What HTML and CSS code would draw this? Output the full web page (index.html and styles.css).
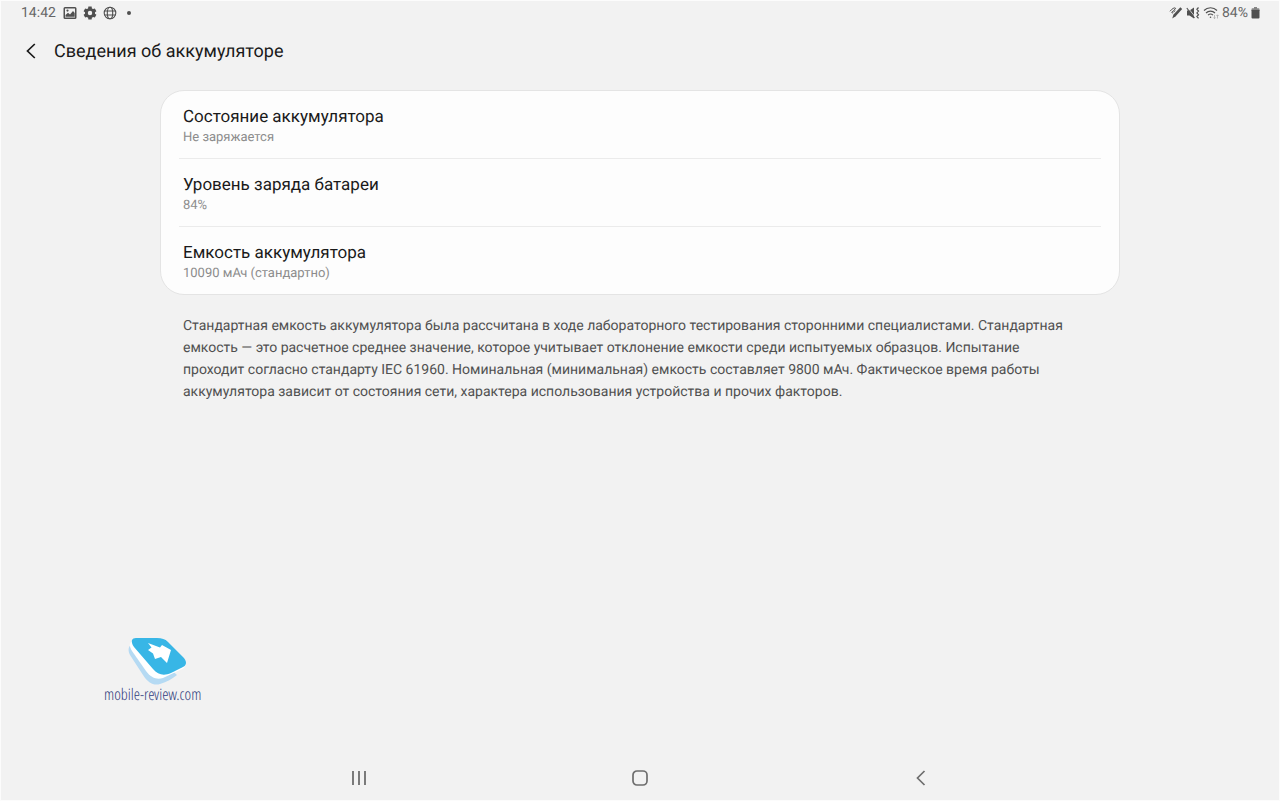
FILE: index.html
```html
<!DOCTYPE html>
<html lang="ru">

<head>
    <meta charset="UTF-8">
    <meta name="viewport" content="width=device-width, initial-scale=1.0">
    <title>Сведения об аккумуляторе</title>
    <link rel="stylesheet" href="styles.css">
</head>

<body>

    <div class="status-bar">
        <div class="status-left">
            <span class="clock">14:42</span>
            <svg width="14" height="14" viewBox="0 0 14 14">
                <path fill="#505050" fill-rule="evenodd" d="M2 1h10a1.500 1.500 0 0 1 1.500 1.500v9A1.500 1.500 0 0 1 12 13H2A1.500 1.500 0 0 1 .5 11.500v-9A1.500 1.500 0 0 1 2 1zM2 2.400v9.200h10V2.400z" />
                <path fill="#505050" d="M2.500 10.800V9l2.500-2.200 2 1.600 3-3.400 1.700 2v3.800z" />
                <circle cx="4.500" cy="4.600" r="1.100" fill="#505050" />
            </svg>
            <svg width="14" height="14" viewBox="0 0 24 24">
                <path fill="#505050" d="M20.500 13.200a8 8 0 0 0 0-2.400l2.500-2-2.700-4.700-3 1.200a8 8 0 0 0-2-1.200L14.800 1H9.200l-.5 3.100a8 8 0 0 0-2 1.200l-3-1.200L1 8.800l2.500 2a8 8 0 0 0 0 2.400L1 15.200l2.700 4.700 3-1.200a8 8 0 0 0 2 1.200l.5 3.100h5.600l.5-3.100a8 8 0 0 0 2-1.200l3 1.200 2.700-4.700zM12 15.800a3.800 3.800 0 1 1 0-7.600 3.800 3.800 0 0 1 0 7.600z" />
            </svg>
            <svg width="14" height="14" viewBox="0 0 14 14" fill="none" stroke="#505050" stroke-width="1.100">
                <circle cx="7" cy="7" r="5.800" />
                <ellipse cx="7" cy="7" rx="2.700" ry="5.800" />
                <path d="M1.400 5h11.200M1.400 9h11.200" />
            </svg>
            <span class="more-dot"></span>
        </div>
        <div class="status-right">
            <svg width="14" height="14" viewBox="0 0 14 14">
                <path fill="#505050" d="M11.300 1.200l1.900 1.700-6.500 7.300L3.200 12.500l1.300-3.900z" />
                <path fill="none" stroke="#505050" stroke-width="1" stroke-linecap="round" d="M1.200 5C3 2.500 6 1.200 6.500 2.200S2.200 5.800 2.800 6.800 5 5.200 6 4.600" />
            </svg>
            <svg width="14" height="14" viewBox="0 0 14 14">
                <path fill="#505050" d="M1 4.500h2.500L8 1.500v11L3.500 9.500H1z" />
                <path fill="none" stroke="#f2f2f2" stroke-width=".8" d="M1.800 1.600l7 9" />
                <path fill="none" stroke="#505050" stroke-width="1.100" d="M.8 2L8.500 12" />
                <path fill="none" stroke="#505050" stroke-width="1.200" d="M12.500 1.500l-1.600 1.800 1.600 1.800-1.600 1.800 1.600 1.800-1.600 1.800 1.600 1.800" />
            </svg>
            <svg width="16" height="14" viewBox="0 0 16 14" fill="none" stroke="#505050" stroke-width="1.100">
                <path d="M1 4.500c3.500-3.600 9.500-3.600 13 0M3 7c2.500-2.500 6.500-2.500 9 0M5 9.200c1.500-1.400 3.500-1.400 5 0" />
                <circle cx="7.500" cy="11.200" r=".8" fill="#505050" stroke="none" />
                <path stroke="#aaaaaa" stroke-width=".8" d="M11.500 9v3.500M10.400 11.500l1.100 1.200 1.100-1.200M14.500 12.500V9M13.400 10l1.100-1.200L15.600 10" />
            </svg>
            <span class="battery-text">84%</span>
            <svg width="9" height="14" viewBox="0 0 9 14">
                <path fill="#858585" d="M3 1h3v1.200h1.500a1 1 0 0 1 1 1V5h-8V3.200a1 1 0 0 1 1-1H3z" />
                <path fill="#505050" d="M.5 4h8v7.500a1 1 0 0 1-1 1h-6a1 1 0 0 1-1-1z" />
            </svg>
        </div>
    </div>

    <header class="header">
        <button class="back-btn" aria-label="Назад">
            <svg width="12" height="18" viewBox="0 0 12 18">
                <path fill="none" stroke="#1a1a1a" stroke-width="1.700" d="M9.800 1L2.500 8l7.300 7" />
            </svg>
        </button>
        <h1>Сведения об аккумуляторе</h1>
    </header>

    <main class="content">
        <div class="card">
            <div class="row">
                <h2>Состояние аккумулятора</h2>
                <p>Не заряжается</p>
            </div>
            <div class="row">
                <h2>Уровень заряда батареи</h2>
                <p>84%</p>
            </div>
            <div class="row">
                <h2>Емкость аккумулятора</h2>
                <p>10090 мАч (стандартно)</p>
            </div>
        </div>
        <p class="note">Стандартная емкость аккумулятора была рассчитана в ходе лабораторного тестирования сторонними специалистами. Стандартная емкость — это расчетное среднее значение, которое учитывает отклонение емкости среди испытуемых образцов. Испытание проходит согласно стандарту IEC 61960. Номинальная (минимальная) емкость составляет 9800 мАч. Фактическое время работы аккумулятора зависит от состояния сети, характера использования устройства и прочих факторов.</p>
    </main>

    <div class="watermark">
        <svg width="60" height="48" viewBox="0 0 60 48">
            <path fill="#b5daf3" d="M3 7C0 9 0 13 2 17l13 20c5 8 11 11 17 9 7-2 12-5 17-9L30 20z" />
            <path fill="#ffffff" d="M5 2C1 5 1 8 4 13l14 20c5 7 11 9 17 7l19-9c4-2 5-5 3-9L30 6z" />
            <path fill="#38b6e6" d="M8 0h21c5 0 8 1 11 4l15 15c4 4 4 8 0 10l-12 6c-7 3-13 2-18-4L6 9C2 3 4 0 8 0z" />
            <path fill="#ffffff" d="M20 5l12 4.500 2-2.500 9 5-4 13-6-6-6 2-2-5.500-5-3.500 3.500-2.500z" />
        </svg>
        <span>mobile-review.com</span>
    </div>

    <nav class="nav-bar">
        <button aria-label="Последние">
            <svg width="18" height="18" viewBox="0 0 18 18">
                <path fill="none" stroke="#6e6e6e" stroke-width="1.800" d="M3 2v14M9 2v14M15 2v14" />
            </svg>
        </button>
        <button aria-label="Домой">
            <svg width="18" height="18" viewBox="0 0 18 18">
                <rect x="2" y="2" width="14" height="14" rx="4" fill="none" stroke="#6e6e6e" stroke-width="1.700" />
            </svg>
        </button>
        <button aria-label="Назад">
            <svg width="18" height="18" viewBox="0 0 18 18">
                <path fill="none" stroke="#6e6e6e" stroke-width="1.700" d="M12.500 2L5.500 9l7 7" />
            </svg>
        </button>
    </nav>

</body>

</html>
```

FILE: styles.css
```css
* {
    box-sizing: border-box;
}

body {
    margin: 0;
    min-height: 100vh;
    display: flex;
    flex-direction: column;
    font-family: Roboto, "Liberation Sans", sans-serif;
    text-rendering: geometricPrecision;
    background: #f2f2f2;
    box-shadow: inset 0 0 0 1px #fcfcfc;
    color: #1a1a1a;
}

h1,
h2,
p {
    margin: 0;
    font-weight: 400;
}

svg {
    display: block;
}

button {
    border: none;
    background: none;
    padding: 0;
    cursor: pointer;
}

.status-bar {
    display: flex;
    justify-content: space-between;
    height: 25px;
    padding: 0 20px 0 21px;
    font-size: 14px;
    color: #666666;
}

.status-left,
.status-right {
    display: flex;
    align-items: center;
}

.status-left {
    gap: 6px;
}

.clock {
    margin-right: 1px;
}

.status-right {
    gap: 3px;
}

.more-dot {
    width: 4px;
    height: 4px;
    margin-left: 4px;
    border-radius: 50%;
    background: #505050;
}

.header {
    display: flex;
    align-items: center;
    gap: 17px;
    height: 54px;
    padding: 0 25px;
}

h1 {
    font-size: 18px;
    line-height: 24px;
}

.content {
    flex: 1;
    width: 75%;
    margin: 11px auto 0;
}

.card {
    padding: 0 18px;
    background: #fdfdfd;
    border: 1px solid #e4e4e4;
    border-radius: 24px;
}

.row {
    padding: 14px 4px 12px;
}

.row + .row {
    border-top: 1px solid #ebebeb;
}

.row h2 {
    font-size: 17px;
    line-height: 24px;
}

.row p {
    font-size: 13px;
    line-height: 17px;
    color: #8c8c8c;
}

.note {
    padding: 20px 46px 20px 23px;
    font-size: 14px;
    line-height: 22px;
    color: #505050;
}

.watermark {
    align-self: flex-start;
    margin: 0 0 54px 104px;
    font-family: "Open Sans Condensed Light", "Open Sans Condensed", "Liberation Sans Narrow", "Liberation Sans", sans-serif;
    font-weight: 300;
    font-size: 16px;
    line-height: 16px;
    color: #303c7c;
}

.watermark svg {
    margin-left: 24px;
}

.nav-bar {
    display: flex;
    justify-content: space-around;
    padding: 13px 218px 14px;
}
```
